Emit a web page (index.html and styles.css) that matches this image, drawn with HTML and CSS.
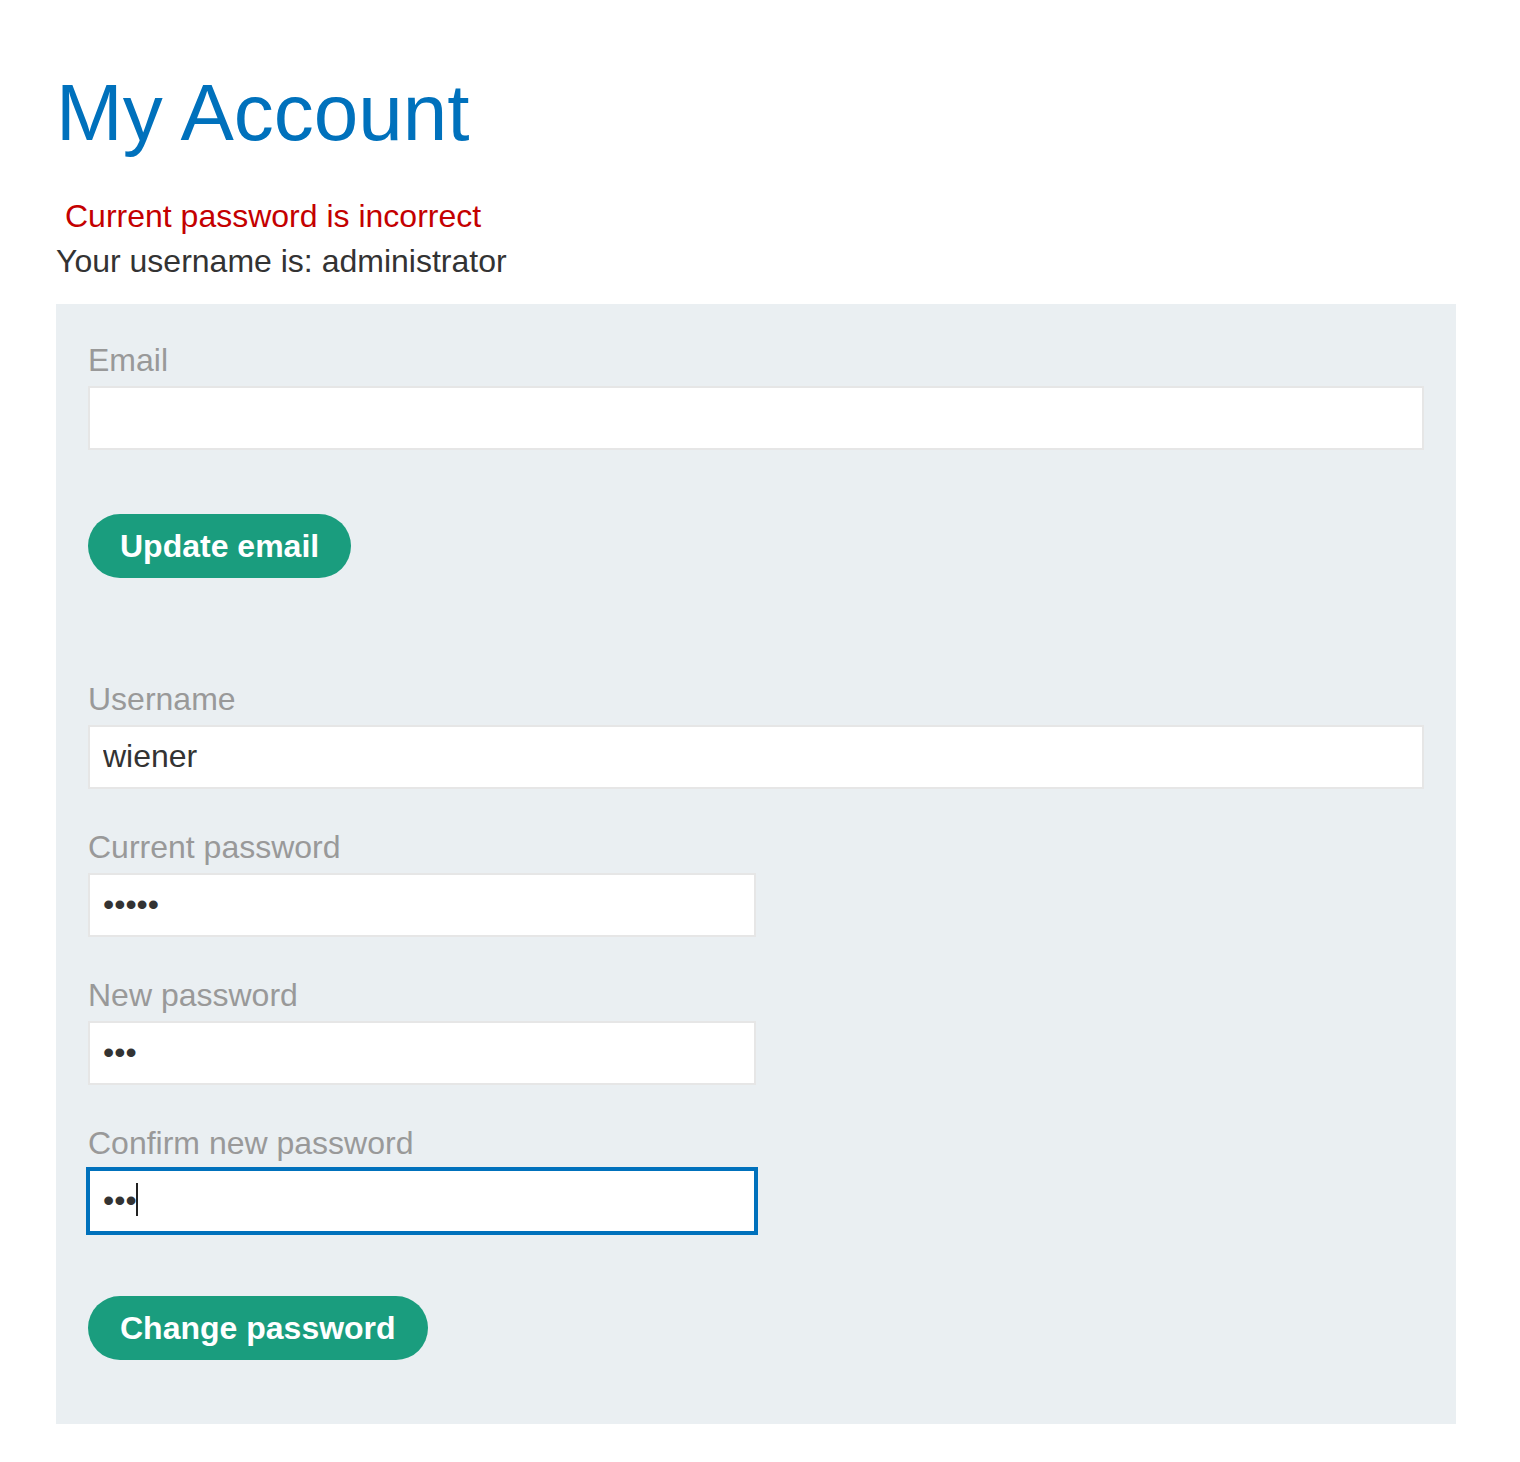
FILE: index.html
```html
<!DOCTYPE html>
<html lang="en">
<head>
<meta charset="utf-8">
<title>My Account</title>
<link rel="stylesheet" href="styles.css">
</head>
<body>
<div class="page">
  <h1 class="title">My Account</h1>
  <p class="warning">Current password is incorrect</p>
  <p class="username">Your username is: administrator</p>
  <section class="panel">
    <form class="form-email">
      <label class="label" for="email">Email</label>
      <input class="field" id="email" type="email" value="">
      <button class="btn" type="button">Update email</button>
    </form>
    <form class="form-password">
      <label class="label" for="username">Username</label>
      <input class="field" id="username" type="text" value="wiener">
      <label class="label" for="current">Current password</label>
      <input class="field half" id="current" type="password" value="peter">
      <label class="label" for="newpw">New password</label>
      <input class="field half" id="newpw" type="password" value="abc">
      <label class="label" for="confirm">Confirm new password</label>
      <div class="field-wrap half">
        <input class="field focused" id="confirm" type="password" value="abc">
        <span class="caret"></span>
      </div>
      <button class="btn btn-change" type="button">Change password</button>
    </form>
  </section>
</div>
</body>
</html>
```
FILE: styles.css
```css
html, body {
  margin: 0;
  padding: 0;
  background: #ffffff;
}

body {
  font-family: "Liberation Sans", Arial, sans-serif;
  font-size: 32px;
  line-height: 1.4;
  color: #333333;
}

.page {
  padding: 0 0 0 56px;
  width: 1400px;
}

.title {
  margin: 67px 0 0;
  font-size: 80px;
  line-height: 92px;
  font-weight: normal;
  color: #0071bc;
}

.warning {
  margin: 35px 0 0;
  padding-left: 9px;
  color: #c40000;
  line-height: 44.8px;
}

.username {
  margin: 0;
  line-height: 44.8px;
  color: #333333;
}

.panel {
  margin-top: 20px;
  background: #eaeff2;
  padding: 34px 32px 64px;
}

.form-email,
.form-password {
  margin: 0;
}

.form-password {
  margin-top: 99px;
}

.label {
  display: block;
  line-height: 44px;
  color: #999999;
  font-size: 32px;
}

.field {
  display: block;
  box-sizing: border-box;
  width: 100%;
  height: 64px;
  margin: 4px 0 36px;
  padding: 0 13px;
  border: 2px solid #e6e6e6;
  border-radius: 0;
  background: #ffffff;
  font-family: "Liberation Sans", Arial, sans-serif;
  font-size: 32px;
  color: #333333;
  outline: none;
}

.half {
  width: 50%;
}

.field-wrap {
  position: relative;
}

.field-wrap .field {
  width: 100%;
}

.focused {
  border-color: #0071bc;
  outline: 2px solid #0071bc;
  outline-offset: 0;
}

.caret {
  position: absolute;
  left: 48px;
  top: 14px;
  width: 2px;
  height: 33px;
  background: #222222;
}

.btn {
  display: block;
  box-sizing: border-box;
  height: 64px;
  margin: 64px 0 0;
  padding: 0 32px;
  border: none;
  border-radius: 32px;
  background: #1a9d7e;
  color: #ffffff;
  font-family: "Liberation Sans", Arial, sans-serif;
  font-size: 32px;
  font-weight: bold;
  line-height: 64px;
  cursor: pointer;
}

.btn-change {
  margin-top: 63px;
}
```
